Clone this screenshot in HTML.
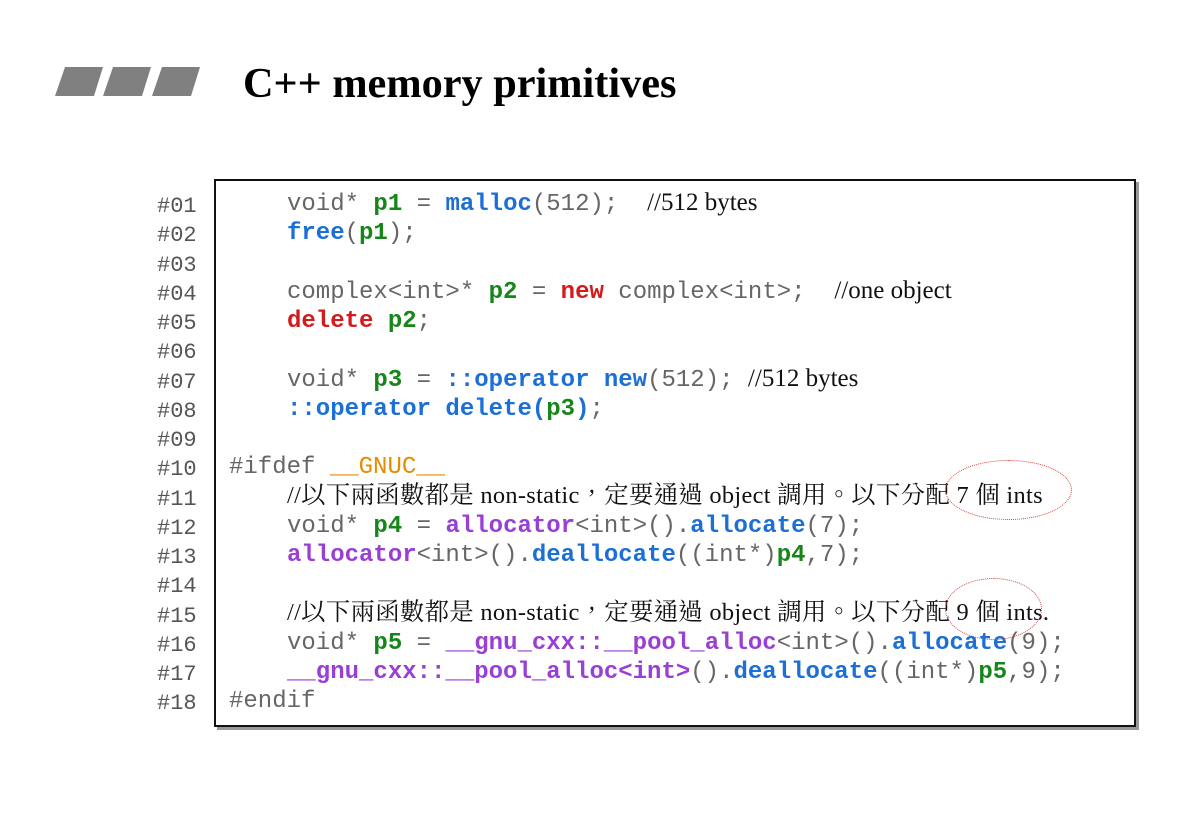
<!DOCTYPE html>
<html><head><meta charset="utf-8"><style>
body{margin:0;width:1201px;height:830px;background:#fff;position:relative;overflow:hidden}
.t{position:absolute;left:243px;top:59px;font:bold 42.3px "Liberation Serif",serif;color:#000;white-space:nowrap}
.box{position:absolute;left:214px;top:179px;width:918px;height:544px;border:2px solid #111;box-shadow:3px 3px 0 #999;background:#fff}
.ln{position:absolute;left:157px;font:22px "Liberation Mono",monospace;color:#555;line-height:29.25px;white-space:pre}
.l{position:absolute;left:287px;font:24px "Liberation Mono",monospace;color:#666;line-height:29.25px;white-space:pre}
.b{color:#1b6fd6;font-weight:bold}.g{color:#16861a;font-weight:bold}.r{color:#d41a1a;font-weight:bold}.p{color:#9a3fd4;font-weight:bold}.o{color:#e58c00}
.c{font-family:"Liberation Serif","Noto Serif CJK TC",serif;font-size:25px;color:#111;line-height:20px}
.cc{font-size:24.4px;letter-spacing:0.3px}
.ov{position:absolute;border:1px dotted #d04040;border-radius:50%}
</style></head><body>
<svg style="position:absolute;left:52px;top:66px" width="160" height="32"><g fill="#808080"><polygon points="13,1 51,1 42,30 3,30"/><polygon points="61,1 99,1 90,30 51,30"/><polygon points="110,1 148,1 139,30 100,30"/></g></svg>
<div class="t">C++ memory primitives</div>
<div class="box"></div>
<div class="ln" style="top:192px">#01
#02
#03
#04
#05
#06
#07
#08
#09
#10
#11
#12
#13
#14
#15
#16
#17
#18</div>
<div class="l" style="top:190px">void* <span class="g">p1</span> = <span class="b">malloc</span>(512);  <span class="c">//512 bytes</span>
<span class="b">free</span>(<span class="g">p1</span>);

complex&lt;int&gt;* <span class="g">p2</span> = <span class="r">new</span> complex&lt;int&gt;;  <span class="c">//one object</span>
<span class="r">delete</span> <span class="g">p2</span>;

void* <span class="g">p3</span> = <span class="b">::operator new</span>(512); <span class="c">//512 bytes</span>
<span class="b">::operator delete(</span><span class="g">p3</span><span class="b">)</span>;

<span style="margin-left:-58px">#ifdef <span class="o">__GNUC__</span></span>
<span class="c cc">//以下兩函數都是 non-static，定要通過 object 調用。以下分配 7 個 ints</span>
void* <span class="g">p4</span> = <span class="p">allocator</span>&lt;int&gt;().<span class="b">allocate</span>(7);
<span class="p">allocator</span>&lt;int&gt;().<span class="b">deallocate</span>((int*)<span class="g">p4</span>,7);

<span class="c cc">//以下兩函數都是 non-static，定要通過 object 調用。以下分配 9 個 ints.</span>
void* <span class="g">p5</span> = <span class="p">__gnu_cxx::__pool_alloc</span>&lt;int&gt;().<span class="b">allocate</span>(9);
<span class="p">__gnu_cxx::__pool_alloc&lt;int&gt;</span>().<span class="b">deallocate</span>((int*)<span class="g">p5</span>,9);
<span style="margin-left:-58px">#endif</span></div>
<div class="ov" style="left:945px;top:460px;width:125px;height:58px"></div>
<div class="ov" style="left:945px;top:578px;width:95px;height:60px"></div>
</body></html>
